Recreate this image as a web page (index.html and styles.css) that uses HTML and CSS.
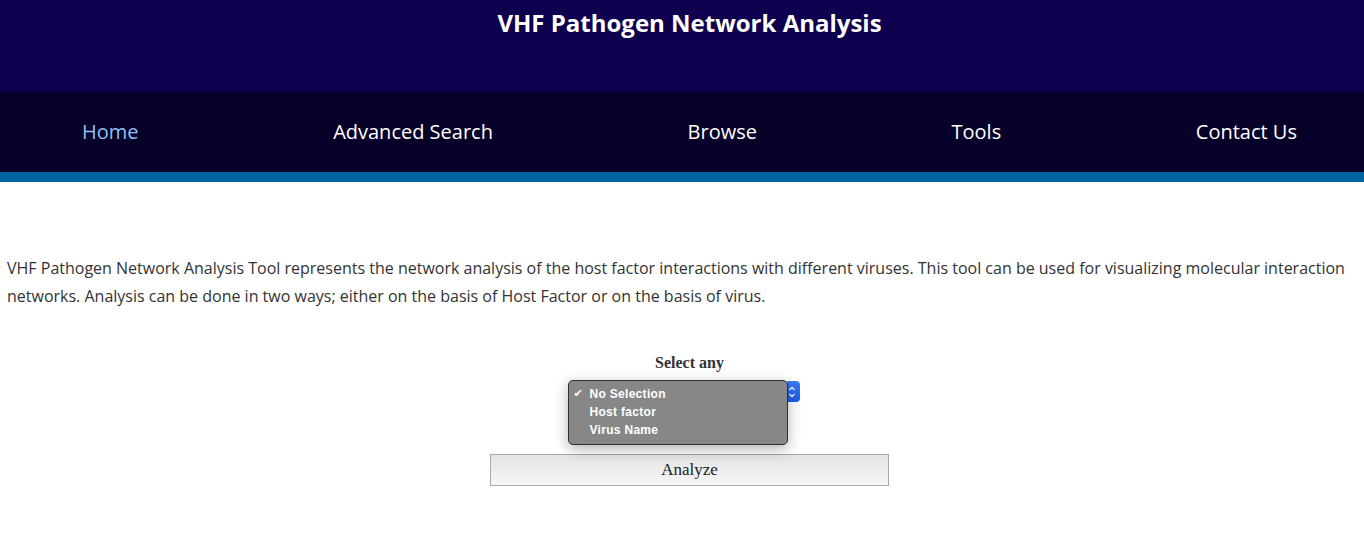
FILE: index.html
```html
<!DOCTYPE html>
<html lang="en">
<head>
    <meta charset="UTF-8">
    <title>VHF Pathogen Network Analysis</title>
    <link rel="stylesheet" href="styles.css">
</head>
<body>
    <!-- Site header -->
    <header class="masthead">
        <h1>VHF Pathogen Network Analysis</h1>
    </header>

    <nav class="menu">
        <a href="#" class="active">Home</a>
        <a href="#">Advanced Search</a>
        <a href="#">Browse</a>
        <a href="#">Tools</a>
        <a href="#">Contact Us</a>
    </nav>
    <div class="stripe"></div>

    <!-- Tool intro -->
    <p class="intro">VHF Pathogen Network Analysis Tool represents the network analysis of the host factor interactions with different viruses. This tool can be used for visualizing molecular interaction networks. Analysis can be done in two ways; either on the basis of Host Factor or on the basis of virus.</p>

    <form class="analyze-form">
        <label class="select-label">Select any</label>
        <div class="picker">
            <div class="picker-box">
                <span class="stepper">
                    <svg width="8" height="14" viewBox="0 0 8 14">
                        <path d="M1.5 5 L4 2.5 L6.5 5 M1.5 9 L4 11.5 L6.5 9" fill="none" stroke="#fff" stroke-width="1.3"/>
                    </svg>
                </span>
            </div>
            <!-- open dropdown list -->
            <ul class="options">
                <li class="checked">No Selection</li>
                <li>Host factor</li>
                <li>Virus Name</li>
            </ul>
        </div>
        <button type="button" class="analyze-btn">Analyze</button>
    </form>
</body>
</html>
```

FILE: styles.css
```css
body {
    margin: 0;
    font-family: "Open Sans", sans-serif;
    background: #fff;
}

.masthead {
    background: #0f004f;
    height: 92px;
    padding: 7px 0 0 15px;
    box-sizing: border-box;
}

.masthead h1 {
    margin: 0;
    color: #fff;
    text-align: center;
    font-size: 24px;
    font-weight: 700;
    line-height: 32px;
}

.menu {
    background: #070028;
    height: 80px;
    display: flex;
    align-items: center;
    justify-content: space-between;
    padding: 0 67px 0 82px;
}

.menu a {
    color: #fff;
    text-decoration: none;
    font-size: 20px;
    line-height: 28px;
}

.menu a.active {
    color: #8cc3f2;
}

.stripe {
    height: 10px;
    background: #00639d;
}

.intro {
    margin: 72px 8px 0 7px;
    font-size: 16px;
    line-height: 28px;
    color: #333;
}

.analyze-form {
    display: flex;
    flex-direction: column;
    align-items: center;
    margin-top: 43px;
    padding-left: 15px;
}

.select-label {
    font-family: "Liberation Serif", serif;
    font-weight: 700;
    font-size: 16px;
    color: #333;
    line-height: 20px;
}

.picker {
    position: relative;
    margin-top: 8px;
}

.picker-box {
    width: 220px;
    height: 21px;
    display: flex;
    justify-content: flex-end;
}

.stepper {
    width: 15px;
    height: 21px;
    background: linear-gradient(#3b7cf5, #1f5ae6);
    border-radius: 4px;
    display: flex;
    align-items: center;
    justify-content: center;
}

.options {
    position: absolute;
    left: -12px;
    top: -1px;
    width: 218px;
    margin: 0;
    padding: 4px 0 5px;
    list-style: none;
    background: #878787;
    border: 1px solid #2e2e2e;
    border-radius: 5px;
    box-shadow: 0 4px 14px rgba(0, 0, 0, 0.3);
}

.options li {
    font-family: "Liberation Sans", sans-serif;
    font-weight: 700;
    font-size: 12px;
    letter-spacing: 0.3px;
    line-height: 18px;
    color: #fff;
    padding-left: 21px;
    position: relative;
}

.options li.checked::before {
    content: "\2714";
    position: absolute;
    left: 5px;
    font-family: "DejaVu Sans", sans-serif;
    font-size: 11px;
}

.analyze-btn {
    margin-top: 52px;
    width: 399px;
    height: 32px;
    background: linear-gradient(#e4e4e4, #f6f6f6);
    border: 1px solid #a9a9a9;
    font-family: "Liberation Serif", serif;
    font-size: 17px;
    color: #222;
}
```
